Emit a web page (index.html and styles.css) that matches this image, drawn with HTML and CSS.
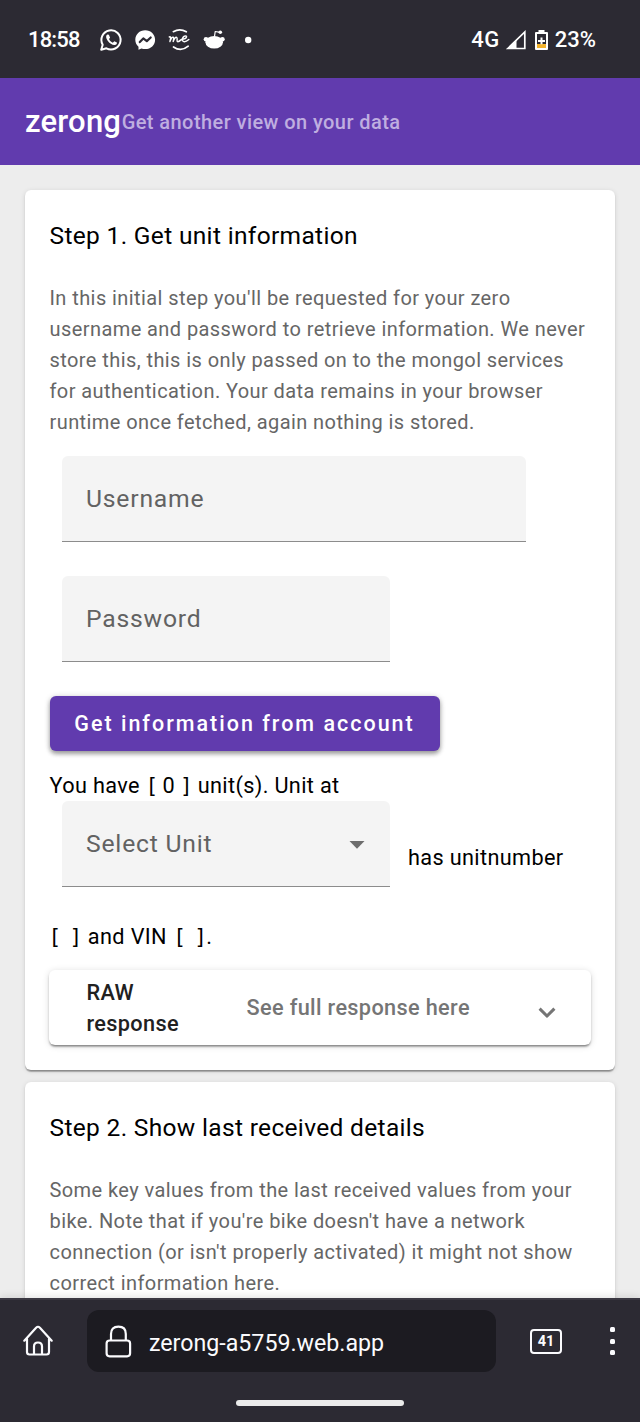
FILE: index.html
```html
<!DOCTYPE html>
<html lang="en">
<head>
<meta charset="utf-8">
<title>zerong</title>
<link rel="stylesheet" href="styles.css">
</head>
<body>
<div class="phone">
  <div class="status">
    <span class="clock">18:58</span>
    <svg class="notifications" width="154" height="28" viewBox="98 26 154 28" fill="none" stroke="#fff" stroke-linecap="round" stroke-linejoin="round">
      <path d="M101.2 49.7l1.5-5A9.6 9.6 0 1 1 106.400 48.300z" stroke-width="2"/>
      <path d="M107.300 34.600c-1.700 1.200-1.500 3.400.2 5.900 2 2.900 4.800 4.700 7.100 4.600 1.700-.2 2.500-1.200 2.300-2.500l-2.600-1.300-1.500 1.500c-1.800-.8-3-2-3.800-3.700l1.100-1.400-1.200-3z" fill="#fff" stroke="none"/>
      <path d="M145.200 30.200c-5.700 0-9.900 4.200-9.900 9.500 0 2.900 1.200 5.300 3.200 7v3.100l3-1.200c1.200.4 2.400.5 3.700.5 5.700 0 9.900-4.100 9.900-9.400s-4.200-9.500-9.900-9.500z" fill="#fff" stroke="none"/>
      <path d="M139.800 42.100l3.500-3.700 3.500 2.700 3.900-3.600" stroke="#2c2a33" stroke-width="2.200"/>
      <path d="M173.300 31.700q6.500-3.700 13 .1M173.500 47q7.500 5.300 14.700-.8" stroke-width="1.700"/>
      <path d="M169.300 37c1.200-.6 1.600.3 1.300 1.600l-.7 3c.9-2.600 2.200-4.600 3.300-4.300s.4 2.200 0 4.200c1-2.600 2.200-4.400 3.400-4.100 1.400.4-.3 3.900.9 4.200 1.300.3 2.700-1 3.800-2 2.200-.3 5-.9 5.200-2.700.1-1.300-2.300-1.400-3.500.6-1.300 2.200-.6 4.100 1.200 4.200s3.200-1 4.600-2.200" stroke-width="1.500"/>
      <path d="M214.500 36.500l.7-5 5 .9" stroke-width="1.2"/>
      <circle cx="220.300" cy="32.300" r="1.800" fill="#fff" stroke="none"/>
      <ellipse cx="214.200" cy="42.300" rx="8.800" ry="6.300" fill="#fff" stroke="none"/>
      <circle cx="206" cy="39.200" r="2.300" fill="#fff" stroke="none"/>
      <circle cx="222.400" cy="39.200" r="2.300" fill="#fff" stroke="none"/>
      <circle cx="248.200" cy="40" r="3.200" fill="#fff" stroke="none"/>
    </svg>
    <span class="network">4G</span>
    <svg class="signal" width="20" height="20" viewBox="0 0 20 20"><path d="M1.800 18.500L18.800 2v16.500z" fill="none" stroke="#fff" stroke-width="1.700"/><path d="M1 19L10.500 9.500V19z" fill="#fff"/></svg>
    <svg class="battery" width="13" height="20" viewBox="0 0 13 20"><path d="M3.500 0h6v2H12q1 0 1 1v16q0 1-1 1H1q-1 0-1-1V3q0-1 1-1h2.500z" fill="#fff"/><path d="M2 4h9v10H2z" fill="#2c2a33"/><path d="M2 14h9v4H2z" fill="#f3b32d"/><path d="M5.500 7.500h2V10H10v2H7.500v2.300h-2V12H3v-2h2.500z" fill="#fff"/></svg>
    <span class="percent">23%</span>
  </div>

  <header class="toolbar">
    <span class="brand">zerong</span><span class="tagline">Get another view on your data</span>
  </header>

  <main class="content">
    <section class="card">
      <h2 class="card-title">Step 1. Get unit information</h2>
      <p class="description">In this initial step you'll be requested for your zero<br>username and password to retrieve information. We never<br>store this, this is only passed on to the mongol services<br>for authentication. Your data remains in your browser<br>runtime once fetched, again nothing is stored.</p>
      <div class="field field-username">Username</div>
      <div class="field field-password">Password</div>
      <button class="submit">Get information from account</button>
      <div class="line units">You have <code>[</code><span class="count">0</span><code>]</code> unit(s). Unit at</div>
      <div class="select-row">
        <div class="field select"><span>Select Unit</span><svg class="arrow" width="16" height="8" viewBox="0 0 16 8"><path d="M.5 0h15L8 7.800z" fill="#6d6d6d"/></svg></div>
        <span class="line">has unitnumber</span>
      </div>
      <div class="line vin"><code>[ ]</code><span class="vin-label">and VIN</span><code>[ ]</code><span class="stop">.</span></div>
      <div class="panel">
        <span class="panel-title">RAW<br>response</span>
        <span class="panel-text">See full response here</span>
        <svg class="chevron" width="18" height="12" viewBox="0 0 18 12"><path d="M1.600 1.600L9 9l7.400-7.400" fill="none" stroke="#757575" stroke-width="3"/></svg>
      </div>
    </section>
    <section class="card card-two">
      <h2 class="card-title">Step 2. Show last received details</h2>
      <p class="description">Some key values from the last received values from your<br>bike. Note that if you're bike doesn't have a network<br>connection (or isn't properly activated) it might not show<br>correct information here.</p>
    </section>
  </main>

  <footer class="browser">
    <div class="browser-row">
      <svg class="home" width="30" height="31" viewBox="0 0 30 31" fill="none" stroke="#fbfbfe" stroke-width="2.200" stroke-linecap="round" stroke-linejoin="round"><path d="M1.300 15.700L13.100 2.700q1.900-1.900 3.800 0l11.800 13M4 14v13q0 2.500 2.500 2.500h17q2.500 0 2.500-2.500V14M11 29V21.500q0-4 4-4t4 4V29"/></svg>
      <div class="address">
        <svg width="27" height="33" viewBox="0 0 27 33" fill="none" stroke="#fbfbfe" stroke-width="2.200"><rect x="1.600" y="15.500" width="23.500" height="15.800" rx="3"/><path d="M6 15.500V9q0-7.300 7.400-7.300T20.800 9v6.500"/></svg>
        <span class="url">zerong-a5759.web.app</span>
      </div>
      <span class="tabs">41</span>
      <span class="menu"><i></i><i></i><i></i></span>
    </div>
    <div class="gesture"></div>
  </footer>
</div>
</body>
</html>
```
FILE: styles.css
```css
* { box-sizing: border-box; }
body { margin: 0; font-family: Roboto, "Liberation Sans", sans-serif; background: #ededed; }
.phone { width: 640px; height: 1422px; display: flex; flex-direction: column; overflow: hidden; }
svg { display: block; flex: none; }

.status { flex: none; height: 78px; padding: 1px 44px 0 28px; display: flex; align-items: center; background: #2c2a33; color: #fff; font-size: 22px; font-weight: 500; }
.clock { width: 70px; white-space: nowrap; letter-spacing: -.85px; }
.notifications { margin-top: 1px; }
.network { margin-left: auto; letter-spacing: .5px; }
.signal { margin-left: 6px; }
.battery { margin-left: 9px; }
.percent { margin-left: 7px; }

.toolbar { flex: none; height: 86.5px; padding: 0 25px; display: flex; align-items: center; background: #613bae; color: #fff; font-weight: 500; white-space: nowrap; }
.brand { font-size: 31px; letter-spacing: .2px; }
.tagline { padding: 1px 0 0 .5px; font-size: 20px; letter-spacing: .43px; color: #bfaee0; }

.content { flex: 1; min-height: 0; padding: 25px 25px 0; overflow: hidden; display: flex; flex-direction: column; gap: 12px; }
.card { flex: none; padding: 26px 24.5px 0; height: 880.5px; background: #fff; border-radius: 6px; display: flex; flex-direction: column; align-items: flex-start; box-shadow: 0 3px 2px -2px rgba(0,0,0,.3), 0 1.500px 1px rgba(0,0,0,.18), 0 1px 5px rgba(0,0,0,.12); }
.card-two { height: 300px; }
.card-title { margin: 0 0 27px; font-size: 24.500px; line-height: 40px; font-weight: 400; letter-spacing: .33px; color: #000; white-space: nowrap; }
.description { margin: 0; font-size: 20px; line-height: 31px; letter-spacing: .42px; color: #666; white-space: nowrap; }
.field { height: 86px; margin-left: 12px; padding: 0 24.500px; display: flex; align-items: center; background: #f4f4f4; border-bottom: 1.500px solid #8c8c8c; border-radius: 6px 6px 0 0; font-size: 24.700px; letter-spacing: .8px; color: #626262; }
.field-username { width: 464px; margin-top: 18.250px; }
.field-password { width: 328px; margin-top: 34px; }
.submit { margin: 34px 0 0; width: 390px; height: 55.500px; padding: 0; border: 0; border-radius: 6px; background: #613bae; color: #fff; font-family: inherit; font-size: 21.500px; font-weight: 500; letter-spacing: 2px; white-space: nowrap; box-shadow: 0 3px 4px rgba(0,0,0,.3), 0 1px 6px rgba(0,0,0,.2); }
.line { font-size: 21.700px; line-height: 30px; letter-spacing: .35px; color: #000; white-space: nowrap; }
code { font-family: "DejaVu Sans Mono", monospace; font-size: 21px; line-height: 1; letter-spacing: -.7px; }
.units { margin-top: 20px; }
.count { padding: 0 5px; }
.select-row { display: flex; align-items: center; gap: 18.500px; }
.select-row .line { padding-top: 27px; }
.select { width: 328px; justify-content: space-between; }
.arrow { margin-top: 2px; }
.vin { margin-top: 35px; display: flex; align-items: baseline; }
.vin code { margin-left: -1px; letter-spacing: -2.200px; }
.vin-label { margin: 0 7.500px 0 8px; }
.stop { margin-left: 1.500px; }
.panel { margin: 18px 0 0 -.5px; width: 542px; height: 75px; border-radius: 6px; padding: 0 34px 0 37.500px; display: flex; align-items: center; font-size: 21.700px; line-height: 31px; font-weight: 500; letter-spacing: .35px; color: #212121; white-space: nowrap; box-shadow: 0 3px 2px -2px rgba(0,0,0,.3), 0 2px 2px rgba(0,0,0,.22), 0 1px 7px rgba(0,0,0,.14); }
.panel-title { width: 160px; }
.panel-text { color: #757575; }
.chevron { margin: 10px 1px 0 auto; }

.browser { flex: none; position: relative; height: 124px; background: #2c2a33; border-top: 2px solid #3b3943; box-shadow: 0 -1px 8px rgba(0,0,0,.12); color: #fbfbfe; }
.browser-row { display: flex; align-items: center; padding: 10px 24px 0 22.500px; }
.home { margin-top: -1px; }
.address { margin-left: 34.500px; width: 409px; height: 62px; border-radius: 12px; padding-left: 18px; display: flex; align-items: center; gap: 17px; background: #1c1b21; font-size: 23.200px; white-space: nowrap; }
.url { padding-top: 3px; }
.tabs { margin-left: 34px; width: 32px; height: 25px; display: flex; align-items: center; justify-content: center; border: 2px solid #fbfbfe; border-radius: 4px; font-size: 14.500px; font-weight: 700; }
.menu { margin-left: auto; margin-right: 1px; display: flex; flex-direction: column; gap: 6.500px; }
.menu i { width: 5px; height: 5px; border-radius: 1.500px; background: #fbfbfe; }
.gesture { width: 168px; height: 6px; margin: 28px 0 0 236px; border-radius: 3px; background: #ebebeb; }
```
